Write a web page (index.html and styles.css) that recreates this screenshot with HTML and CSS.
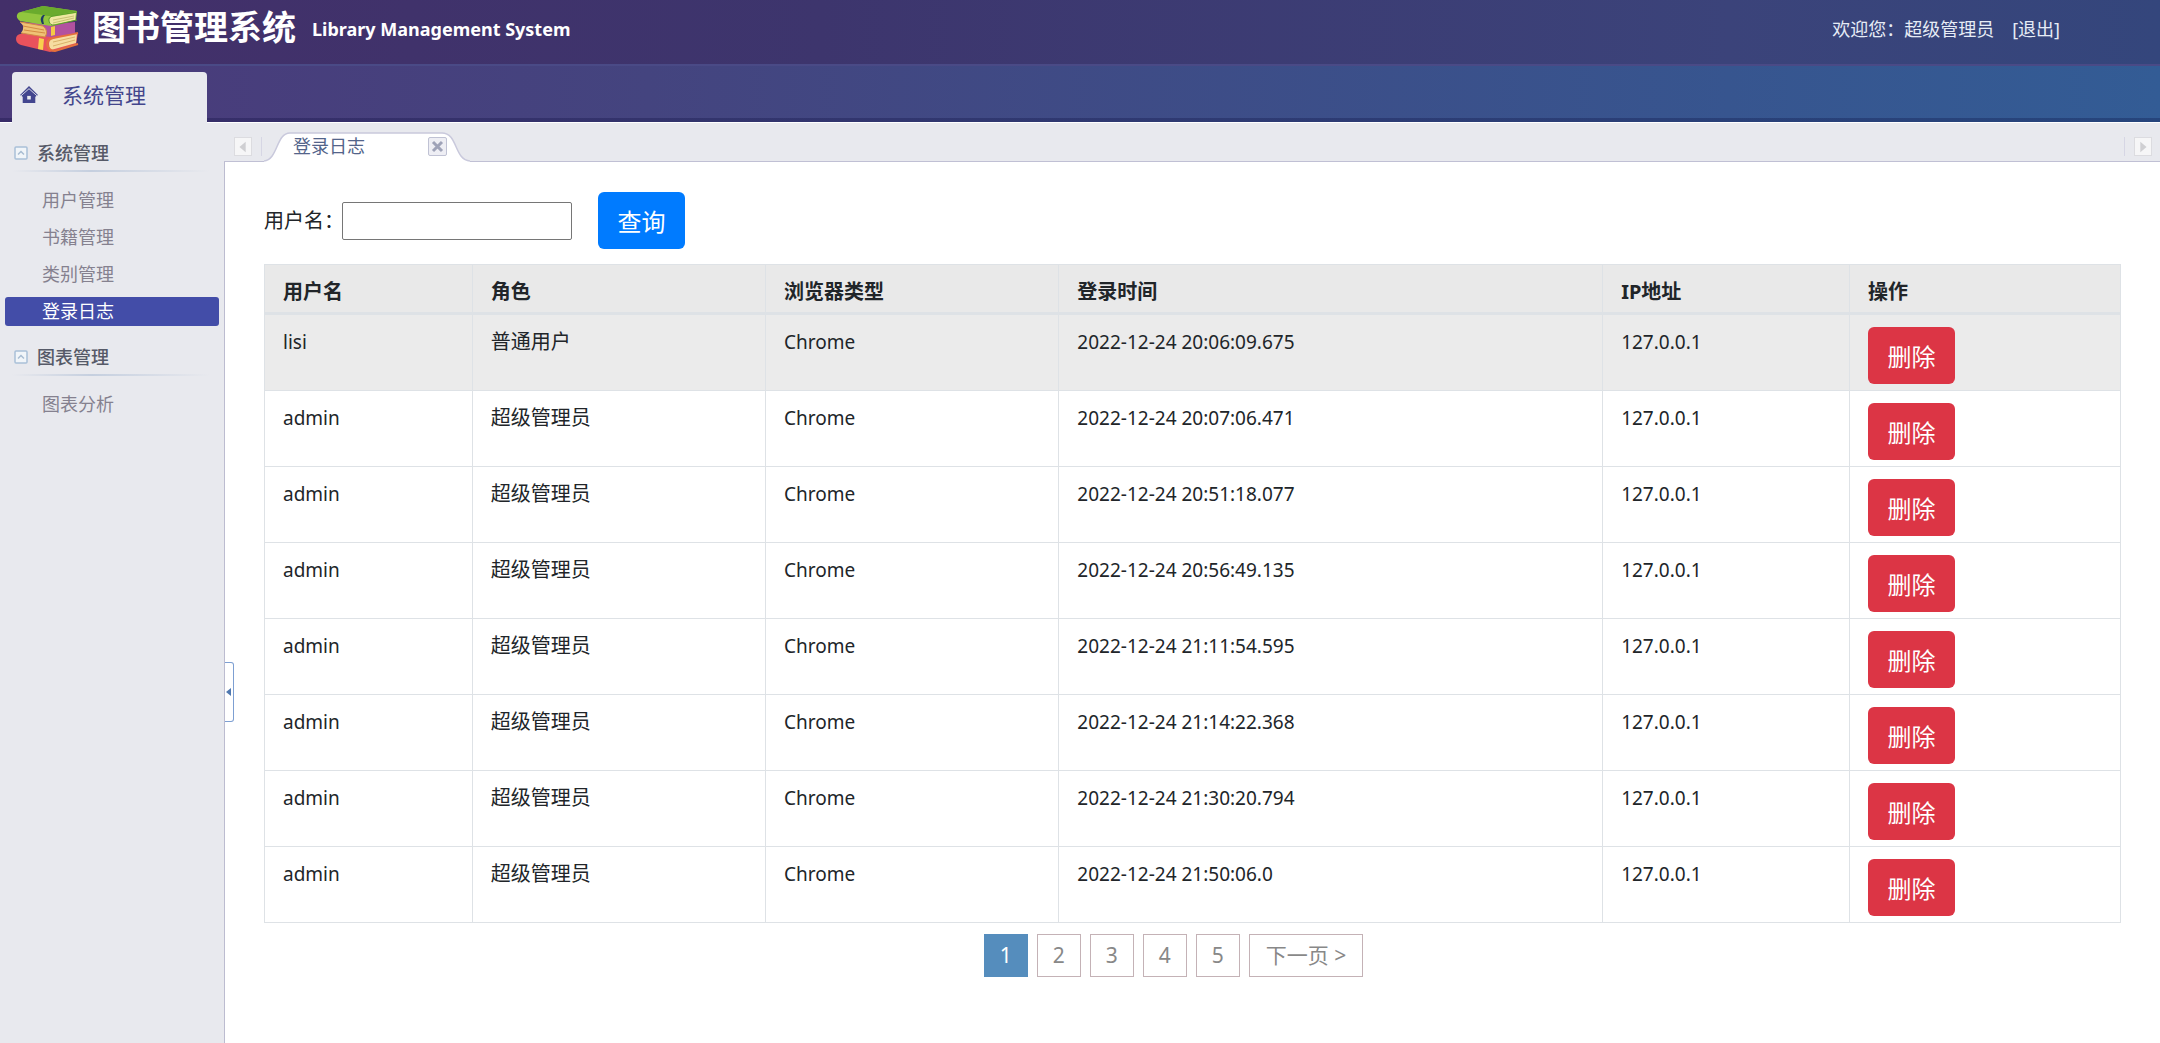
FILE: index.html
```html
<!DOCTYPE html>
<html lang="zh-CN">
<head>
<meta charset="utf-8">
<meta name="viewport" content="width=device-width, initial-scale=1">
<title>图书管理系统</title>
<link rel="stylesheet" href="styles.css">
</head>
<body>
<header class="topbar">
  <svg class="logo" viewBox="0 0 64 46" aria-hidden="true">
    <path d="M5 28 L40 24 L63 27 L61 38 L35 46 L6 39 Q1 37 1 33 Q1 29 5 28Z" fill="#e9525c"/>
    <path d="M36 33 L62 27 L61 37 L36 44 Q32 38 36 33Z" fill="#f6dda0"/>
    <path d="M63 27 L38 32 Q30 34 33 41 Q35 45 40 45 L63 38" fill="none" stroke="#e5703c" stroke-width="2"/>
    <path d="M38 36 L60 31 M38 40 L60 34" stroke="#d9b169" stroke-width="1"/>
    <path d="M24 32 L29 33 L28 44 L23 43Z" fill="#f8cf4e"/>
    <path d="M5 16 L38 18 L60 16 L60 27 L36 31 L8 28 Q12 22 5 16Z" fill="#b2529f"/>
    <path d="M5 16 L28 20 Q34 25 30 31 L6 27 Q11 21 5 16Z" fill="#efc275"/>
    <path d="M5 16 L28 20 Q34 25 30 31 L6 27 M8 20 L29 24 M9 24 L30 27" fill="none" stroke="#d58b43" stroke-width="1"/>
    <path d="M36 21 L40 20 L40 29 L36 30Z" fill="#f6c944"/>
    <path d="M6 6 L28 0 L62 5 L61 14 L36 20 L5 15 Q1 12 2 9 Q3 6 6 6Z" fill="#91c63e"/>
    <path d="M6 6 L28 0 L62 5 L38 10 Q30 10 28 9Z" fill="#6aab2d"/>
    <path d="M36 11 L61 7 L60 14 L36 19 Q32 15 36 11Z" fill="#efe8a2"/>
    <path d="M62 6 L38 10 Q33 11 34 15 Q35 20 40 19 L62 14" fill="none" stroke="#5c9e2d" stroke-width="1"/>
    <path d="M38 14 L59 10 M38 17 L59 12" stroke="#c9c072" stroke-width="1"/>
    <path d="M28 9 Q24 12 27 18 L29 18 Q27 12 30 9Z" fill="#1e3b66"/>
  </svg>
  <h1 class="title">图书管理系统</h1>
  <span class="subtitle">Library Management System</span>
  <p class="welcome"><span>欢迎您：超级管理员</span><a href="#logout">[退出]</a></p>
</header>

<nav class="navbar">
  <a class="nav-tab" href="#system">
    <svg class="home" viewBox="0 0 20 20" aria-hidden="true">
      <path d="M10 0 L20 10 L17 12 L17 19 L3 19 L3 12 L0 10Z" fill="#43468f"/>
      <path d="M1 11 L10 3 L19 11" fill="none" stroke="#e8e9ee" stroke-width="1"/>
      <rect x="8" y="11" width="4" height="4" fill="#e8e9ee"/>
    </svg>
    系统管理
  </a>
</nav>

<div class="body">
  <aside class="sidebar">
    <section class="group">
      <h2 class="group-title">
        <svg class="fold" viewBox="0 0 14 14" aria-hidden="true"><rect x="1" y="1" width="12" height="12" rx="1" fill="#f1f5f9" stroke="#a9c0d8" stroke-width="1.5"/><path d="M4 8.500 L7 5.500 L10 8.500" fill="none" stroke="#a9bdd2" stroke-width="1.500"/></svg>
        系统管理
      </h2>
      <ul class="menu">
        <li><a href="#users">用户管理</a></li>
        <li><a href="#books">书籍管理</a></li>
        <li><a href="#types">类别管理</a></li>
        <li><a class="active" href="#logs">登录日志</a></li>
      </ul>
    </section>
    <section class="group">
      <h2 class="group-title">
        <svg class="fold" viewBox="0 0 14 14" aria-hidden="true"><rect x="1" y="1" width="12" height="12" rx="1" fill="#f1f5f9" stroke="#a9c0d8" stroke-width="1.5"/><path d="M4 8.500 L7 5.500 L10 8.500" fill="none" stroke="#a9bdd2" stroke-width="1.500"/></svg>
        图表管理
      </h2>
      <ul class="menu">
        <li><a href="#charts">图表分析</a></li>
      </ul>
    </section>
  </aside>

  <div class="work">
    <div class="tabs">
      <button class="scroll left" type="button" aria-label="向左"><svg viewBox="0 0 18 18"><path d="M12 3 L12 15 L5 9Z" fill="#cfcfd2"/></svg></button>
      <div class="tab">
        <svg class="tab-shape" viewBox="0 0 206 30" preserveAspectRatio="none" aria-hidden="true"><path d="M0 29 C14 28 12 1 26 1 L178 1 C194 1 190 28 206 29 V30 H0Z" fill="#fff"/><path d="M0 29 C14 28 12 1 26 1 L178 1 C194 1 190 28 206 29" fill="none" stroke="#c9c9dc" stroke-width="1.500"/></svg>
        <a class="tab-name" href="#logs">登录日志</a>
        <button class="close" type="button" aria-label="关闭"><svg viewBox="0 0 17 17"><path d="M4 4 L13 13 M13 4 L4 13" stroke="#9fa3b8" stroke-width="3"/></svg></button>
      </div>
      <button class="scroll right" type="button" aria-label="向右"><svg viewBox="0 0 18 18"><path d="M6 3 L6 15 L13 9Z" fill="#cfcfd2"/></svg></button>
    </div>

    <main class="panel">
      <button class="collapse" type="button" aria-label="收起"><svg viewBox="0 0 6 8"><path d="M6 0 V8 L1 4Z" fill="#4f78b0"/></svg></button>
      <form class="search">
        <label for="username">用户名：</label>
        <input id="username" type="text">
        <button class="btn primary" type="button">查询</button>
      </form>
      <table class="logs">
        <colgroup><col class="c-user"><col class="c-role"><col class="c-browser"><col class="c-time"><col class="c-ip"><col></colgroup>
        <thead>
          <tr><th>用户名</th><th>角色</th><th>浏览器类型</th><th>登录时间</th><th>IP地址</th><th>操作</th></tr>
        </thead>
        <tbody>
          <tr class="hover"><td>lisi</td><td class="role">普通用户</td><td>Chrome</td><td>2022-12-24 20:06:09.675</td><td>127.0.0.1</td><td><button class="btn danger" type="button">删除</button></td></tr>
          <tr><td>admin</td><td class="role">超级管理员</td><td>Chrome</td><td>2022-12-24 20:07:06.471</td><td>127.0.0.1</td><td><button class="btn danger" type="button">删除</button></td></tr>
          <tr><td>admin</td><td class="role">超级管理员</td><td>Chrome</td><td>2022-12-24 20:51:18.077</td><td>127.0.0.1</td><td><button class="btn danger" type="button">删除</button></td></tr>
          <tr><td>admin</td><td class="role">超级管理员</td><td>Chrome</td><td>2022-12-24 20:56:49.135</td><td>127.0.0.1</td><td><button class="btn danger" type="button">删除</button></td></tr>
          <tr><td>admin</td><td class="role">超级管理员</td><td>Chrome</td><td>2022-12-24 21:11:54.595</td><td>127.0.0.1</td><td><button class="btn danger" type="button">删除</button></td></tr>
          <tr><td>admin</td><td class="role">超级管理员</td><td>Chrome</td><td>2022-12-24 21:14:22.368</td><td>127.0.0.1</td><td><button class="btn danger" type="button">删除</button></td></tr>
          <tr><td>admin</td><td class="role">超级管理员</td><td>Chrome</td><td>2022-12-24 21:30:20.794</td><td>127.0.0.1</td><td><button class="btn danger" type="button">删除</button></td></tr>
          <tr><td>admin</td><td class="role">超级管理员</td><td>Chrome</td><td>2022-12-24 21:50:06.0</td><td>127.0.0.1</td><td><button class="btn danger" type="button">删除</button></td></tr>
        </tbody>
      </table>
      <nav class="pager" aria-label="分页">
        <a class="current" href="#p1">1</a>
        <a href="#p2">2</a>
        <a href="#p3">3</a>
        <a href="#p4">4</a>
        <a href="#p5">5</a>
        <a class="next" href="#p2">下一页 &gt;</a>
      </nav>
    </main>
  </div>
</div>
</body>
</html>
```
FILE: styles.css
```css
* { box-sizing: border-box; }

body {
  margin: 0;
  min-height: 100vh;
  display: flex;
  flex-direction: column;
  background: #e8e9ee;
  color: #212529;
  font-family: "Noto Sans", "Noto Sans CJK SC", sans-serif;
  font-size: 18px;
  line-height: 1.5;
}

a { color: inherit; text-decoration: none; }
button { font-family: inherit; padding: 0; cursor: pointer; }
svg { display: block; }

/* header */
.topbar {
  display: flex;
  align-items: center;
  height: 64px;
  padding: 0 100px 6px 15px;
  background: linear-gradient(to right, #432f69, #3d356d 38%, #3b437a 80%, #34467c);
  color: #fff;
}
.logo { width: 64px; height: 46px; }
.title { margin: 0 0 4px 13px; font-size: 34px; line-height: 40px; font-weight: 700; }
.subtitle { margin-left: 16px; font-size: 18px; font-weight: 700; }
.welcome { display: flex; gap: 18px; margin: 0 0 0 auto; color: #e6ecf6; }

.navbar {
  display: flex;
  align-items: flex-end;
  height: 59px;
  padding-left: 12px;
  border-top: 2px solid #4a4a86;
  background:
    linear-gradient(#fff, #fff) bottom / 100% 1px no-repeat,
    linear-gradient(rgba(0, 0, 50, .25), rgba(0, 0, 50, .25)) 0 100% / 100% 5px no-repeat,
    linear-gradient(to right, #4a3a7a, #44447f 30%, #37558f 80%, #335c95);
}
.nav-tab {
  display: flex;
  align-items: center;
  gap: 24px;
  width: 195px;
  height: 51px;
  padding: 0 8px 3px;
  border-radius: 4px 4px 0 0;
  background: #e8e9ee;
  color: #43468c;
  font-size: 21px;
}
.home { width: 18px; height: 18px; margin-bottom: 3px; }

.body { flex: 1; display: flex; }

/* sidebar */
.sidebar { width: 224px; flex: none; padding-top: 15px; }
.group { margin-bottom: 16px; }
.group-title {
  display: flex;
  align-items: center;
  gap: 9px;
  height: 34px;
  margin: 0 14px 14px 12px;
  padding: 0 2px 4px;
  background: linear-gradient(to right, transparent, #c5cfdf 40%, transparent) bottom / 100% 2px no-repeat;
  color: #565a68;
  font-size: 18px;
  font-weight: 500;
}
.fold { width: 14px; height: 14px; }
.menu { display: grid; gap: 8px; margin: 0; padding: 0 5px; list-style: none; }
.menu a {
  display: block;
  padding-left: 37px;
  border-radius: 3px;
  line-height: 29px;
  color: #85818f;
}
.menu .active { background: #434da8; color: #fff; }

/* tab strip */
.work { flex: 1; min-width: 0; display: flex; flex-direction: column; }
.tabs {
  display: flex;
  align-items: flex-end;
  height: 39px;
  background: linear-gradient(#c0c0d4, #c0c0d4) bottom / 100% 1px no-repeat;
}
.scroll {
  width: 18px;
  height: 19px;
  margin: 0 0 6px 10px;
  border: 1px solid #dcdce0;
  background: #f6f6f7;
}
.scroll.right { margin: 0 8px 6px auto; box-shadow: -9px 0 0 #e8e9ee, -10px 0 0 #d6d6e4; }
.tab {
  position: relative;
  display: flex;
  align-items: center;
  justify-content: space-between;
  width: 206px;
  height: 30px;
  margin-left: 12px;
  padding: 0 23px 1px 29px;
}
.left { box-shadow: 9px 0 0 #e8e9ee, 10px 0 0 #d6d6e4; }
.tab-shape { position: absolute; inset: 0; width: 100%; height: 100%; }
.tab-name { position: relative; color: #53648a; }
.close {
  position: relative;
  width: 19px;
  height: 19px;
  border: 1px solid #c0c2d4;
  border-radius: 2px;
  background: #eeeef4;
}

/* content */
.panel {
  position: relative;
  flex: 1;
  padding: 30px 39px 40px 39px;
  border-left: 1px solid #bcbcd0;
  background: #fff;
}
.collapse {
  position: absolute;
  left: 0;
  top: calc(50% + 59px);
  width: 9px;
  height: 60px;
  border: 1px solid #7d9fd2;
  border-left: 0;
  border-radius: 0 3px 3px 0;
  background: #fff;
}
.collapse svg { width: 6px; height: 8px; }

.search { display: flex; align-items: center; margin-bottom: 15px; font-size: 20px; }
.search label { width: 78px; white-space: nowrap; }
.search input {
  width: 230px;
  height: 38px;
  margin-right: 26px;
  padding: 2px 6px;
  border: 1px solid #767676;
  border-radius: 2px;
  font: inherit;
}
.btn {
  display: block;
  width: 87px;
  height: 57px;
  border: 0;
  border-radius: 6px;
  color: #fff;
  font-size: 24px;
  line-height: 55px;
  padding-top: 2px;
}
.primary { background: #007bff; }
.danger { background: #dc3545; }

.logs { width: 100%; table-layout: fixed; border-collapse: collapse; }
.c-user { width: 11.2%; }
.c-role, .c-browser { width: 15.8%; }
.c-time { width: 29.3%; }
.c-ip { width: 13.3%; }
.logs th, .logs td {
  border: 1px solid #dee2e6;
  padding: 12px 18px 6px;
  text-align: left;
  vertical-align: top;
  font-size: 19px;
  line-height: 30px;
}
.logs th { padding-bottom: 5px; border-bottom-width: 3px; background: #e9e9e9; font-size: 20px; }
.logs .role { font-size: 20px; }
.hover { background: #ebebeb; }

.pager {
  display: flex;
  justify-content: center;
  gap: 9px;
  margin-top: 11px;
  padding-right: 38px;
  font-size: 21px;
  line-height: 41px;
}
.pager a {
  min-width: 44px;
  border: 1px solid #c4b2b6;
  color: #888;
  text-align: center;
}
.pager .current { border-color: #558dbd; background: #558dbd; color: #fff; }
.pager .next { padding: 0 16px; }
```
